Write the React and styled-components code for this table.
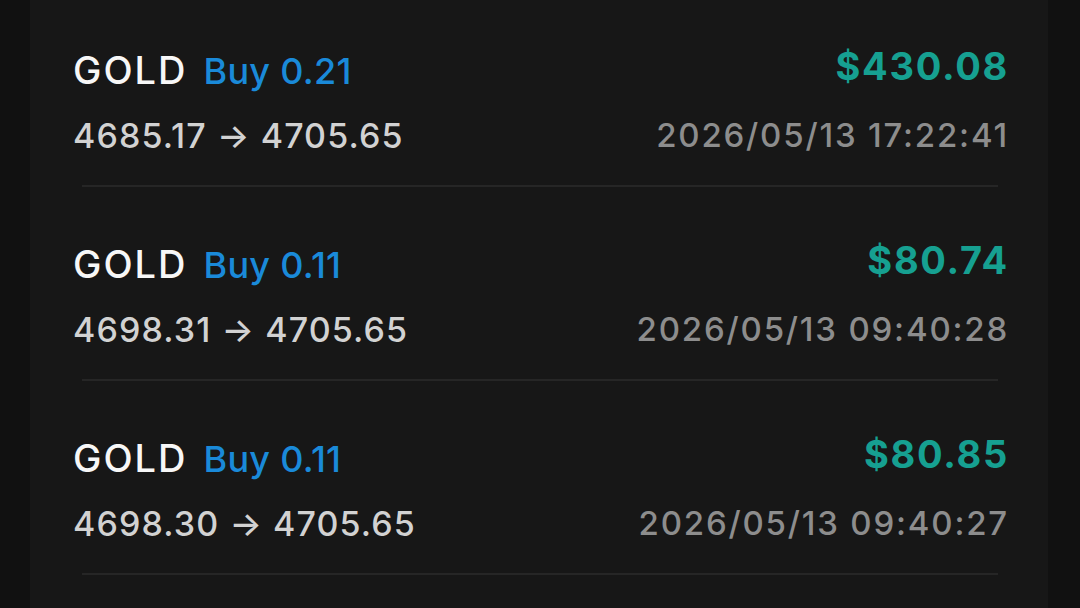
import React from "react";
import styled, { createGlobalStyle } from "styled-components";

const Global = createGlobalStyle`
  html, body { margin: 0; padding: 0; background: #111111; }
  body { font-family: Inter, "Noto Sans", sans-serif; -webkit-font-smoothing: antialiased; }
`;

const Page = styled.div`
  width: 1080px;
  height: 608px;
  overflow: hidden;
  background: #111111;
  padding: 0 32px 0 30px;
  box-sizing: border-box;
`;

const Card = styled.div`
  background: #171717;
  height: 100%;
  overflow: hidden;
`;

const List = styled.div`
  margin-top: -7px;
  display: flex;
  flex-direction: column;
`;

const Row = styled.div`
  display: flex;
  justify-content: space-between;
  align-items: flex-start;
  padding: 54px 39px 0 43px;
  height: 138px;
  box-sizing: content-box;
`;

const Col = styled.div`
  display: flex;
  flex-direction: column;
  align-items: ${(p) => (p.$right ? "flex-end" : "flex-start")};
`;

const TitleLine = styled.div`
  display: flex;
  align-items: baseline;
  gap: 16px;
  height: 46px;
  line-height: 46px;
`;

const Symbol = styled.span`
  font-size: 38px;
  font-weight: 500;
  color: #f7f7f7;
  letter-spacing: 2px;
`;

const Side = styled.span`
  font-size: 36px;
  font-weight: 500;
  color: #1a8ad9;
  letter-spacing: 0.3px;
`;

const Prices = styled.div`
  margin-top: 23px;
  font-size: 34px;
  font-weight: 500;
  color: #d2d2d2;
  line-height: 40px;
  letter-spacing: 1.1px;
`;

const Amount = styled.div`
  font-size: 38px;
  font-weight: 700;
  color: #16a091;
  line-height: 46px;
  margin-top: -4px;
  letter-spacing: 1.7px;
`;

const DateText = styled.div`
  margin-top: 26px;
  font-size: 33px;
  font-weight: 500;
  color: #8d8d8d;
  line-height: 40px;
  letter-spacing: 1.8px;
`;

const Divider = styled.div`
  height: 2px;
  background: #262626;
  margin: 0 50px 0 52px;
`;

const trades = [
  { side: "Buy 0.21", open: "4685.17", close: "4705.65", pnl: "$430.08", time: "2026/05/13 17:22:41" },
  { side: "Buy 0.11", open: "4698.31", close: "4705.65", pnl: "$80.74", time: "2026/05/13 09:40:28" },
  { side: "Buy 0.11", open: "4698.30", close: "4705.65", pnl: "$80.85", time: "2026/05/13 09:40:27" },
];

export default function App() {
  return (
    <>
      <Global />
      <Page>
        <Card>
          <List>
            {trades.map((t, i) => (
              <React.Fragment key={i}>
                <Row>
                  <Col>
                    <TitleLine>
                      <Symbol>GOLD</Symbol>
                      <Side>{t.side}</Side>
                    </TitleLine>
                    <Prices>
                      {t.open} → {t.close}
                    </Prices>
                  </Col>
                  <Col $right>
                    <Amount>{t.pnl}</Amount>
                    <DateText>{t.time}</DateText>
                  </Col>
                </Row>
                <Divider />
              </React.Fragment>
            ))}
          </List>
        </Card>
      </Page>
    </>
  );
}
